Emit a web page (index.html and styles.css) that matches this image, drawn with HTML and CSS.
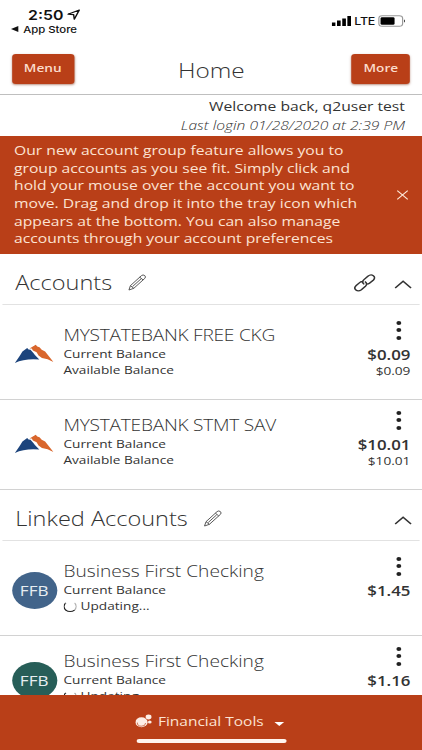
FILE: index.html
```html
<!DOCTYPE html>
<html lang="en">
<head>
  <meta charset="UTF-8" />
  <meta name="viewport" content="width=device-width, initial-scale=1.0" />
  <title>Home</title>
  <link rel="stylesheet" href="styles.css">
</head>
<body>
  <svg class="sprite">
    <symbol id="pencil" viewBox="0 0 15 17">
      <path d="M.7 16 1.9 11.7 11 1.6Q12.3.3 13.7 1.6 14.9 3 13.7 4.4L4.7 14.3Z M1.9 11.7 4.7 14.3 M9.6 3.2 12.3 5.9 M3.7 12.5 10.6 4.9" />
    </symbol>
    <symbol id="chevron" viewBox="0 0 15 9">
      <path d="M1 8 7.5 1.3 14 8" />
    </symbol>
    <symbol id="mountain" viewBox="0 0 32 20">
      <path fill="#d9662c" d="M12.2 4.4 17.3.7 18.6 2.4 20.4 3.2 22.2 5.8 25 7.6 31.8 18Q27 14.6 22.4 14L19.6 11.4 18 8.2 15 6.6 14 4.6Z" />
      <path fill="#1c447c" d="M.2 19 4.4 11.4 6.4 7.4 10.3 4 11.4 5.6 13 5.8 15.2 8.8 16.6 11 20.2 15.6Q8.5 14.3.2 19Z" />
    </symbol>
  </svg>

  <div class="screen">
    <div class="status-bar">
      <div class="status-left">
        <div class="time">2:50
          <svg width="11" height="11" viewBox="0 0 11 11"><path d="M.8 5.2 10 1 5.9 10.2 5.4 5.7Z" fill="none" stroke="#111" stroke-width="1.2" stroke-linejoin="round" /></svg>
        </div>
        <div class="back"><span class="back-arrow"></span>App Store</div>
      </div>
      <div class="status-right">
        <svg width="16" height="10" viewBox="0 0 16 10"><path d="M0 6.4h3V10H0zM4.3 4.6h3V10h-3zM8.6 2.4h3V10h-3zM12.8 0h3v10h-3z" /></svg>
        <span class="network">LTE</span>
        <svg width="23" height="12" viewBox="0 0 23 12"><rect x=".6" y=".8" width="19.5" height="10.4" rx="2.8" fill="none" stroke="#999" /><rect x="2" y="2.2" width="11.5" height="7.6" rx="1.2" /><path d="M21.3 4.2q1.5 1.8 0 3.6z" /></svg>
      </div>
    </div>

    <div class="nav-bar">
      <button class="btn">Menu</button>
      <h1>Home</h1>
      <button class="btn btn-more">More</button>
    </div>

    <div class="welcome">
      <div class="welcome-name">Welcome back, q2user test</div>
      <div class="last-login">Last login 01/28/2020 at 2:39 PM</div>
    </div>

    <div class="notice">
      <p>Our new account group feature allows you to<br>
        group accounts as you see fit. Simply click and<br>
        hold your mouse over the account you want to<br>
        move. Drag and drop it into the tray icon which<br>
        appears at the bottom. You can also manage<br>
        accounts through your account preferences</p>
      <svg class="close" width="10" height="10" viewBox="0 0 10 10"><path d="M.7.7 9.3 9.3M9.3.7.7 9.3" /></svg>
    </div>

    <div class="content">
      <div class="group">
        <div class="group-head">
          <h2>Accounts</h2>
          <svg class="icon pencil" width="15" height="17"><use href="#pencil" /></svg>
          <svg class="icon link" width="18" height="18" viewBox="0 0 18 18"><path d="M8.6 10.4Q6.2 8 8.4 5.6L11.6 2.2Q14-.1 16.1 1.7 18.1 3.6 16.2 6L12.9 9.3Q12 10.2 10.8 10.2M9.2 7.4Q11.8 9.8 9.6 12.3L6.3 15.7Q3.8 18 1.8 16 -.1 14.1 1.8 11.8L5.1 8.4Q6 7.5 7.2 7.5" /></svg>
          <svg class="icon chevron" width="15" height="9"><use href="#chevron" /></svg>
        </div>
        <div class="account">
          <svg class="logo" width="32" height="20"><use href="#mountain" /></svg>
          <div class="info">
            <div class="name name-caps">MYSTATEBANK FREE CKG</div>
            <div class="label">Current Balance</div>
            <div class="label">Available Balance</div>
          </div>
          <div class="amounts">
            <div class="dots"><i></i><i></i><i></i></div>
            <div class="current">$0.09</div>
            <div class="available">$0.09</div>
          </div>
        </div>
        <div class="account">
          <svg class="logo" width="32" height="20"><use href="#mountain" /></svg>
          <div class="info">
            <div class="name name-caps">MYSTATEBANK STMT SAV</div>
            <div class="label">Current Balance</div>
            <div class="label">Available Balance</div>
          </div>
          <div class="amounts">
            <div class="dots"><i></i><i></i><i></i></div>
            <div class="current">$10.01</div>
            <div class="available">$10.01</div>
          </div>
        </div>
      </div>

      <div class="group">
        <div class="group-head">
          <h2>Linked Accounts</h2>
          <svg class="icon pencil" width="15" height="17"><use href="#pencil" /></svg>
          <svg class="icon chevron" width="15" height="9"><use href="#chevron" /></svg>
        </div>
        <div class="account">
          <div class="avatar blue">FFB</div>
          <div class="info">
            <div class="name">Business First Checking</div>
            <div class="label">Current Balance</div>
            <div class="label updating"><span class="spinner"></span>Updating...</div>
          </div>
          <div class="amounts">
            <div class="dots"><i></i><i></i><i></i></div>
            <div class="current">$1.45</div>
          </div>
        </div>
        <div class="account">
          <div class="avatar green">FFB</div>
          <div class="info">
            <div class="name">Business First Checking</div>
            <div class="label">Current Balance</div>
            <div class="label updating"><span class="spinner"></span>Updating...</div>
          </div>
          <div class="amounts">
            <div class="dots"><i></i><i></i><i></i></div>
            <div class="current">$1.16</div>
          </div>
        </div>
      </div>
    </div>

    <div class="footer">
      <div class="tools">
        <svg width="14" height="14" viewBox="0 0 14 14"><circle cx="5" cy="8.2" r="5" /><circle cx="10.8" cy="3" r="2.4" /><circle cx="11.8" cy="8" r="1.5" /><path d="M1.6 8.6A3.4 3.4 0 0 0 8.4 9" /></svg>
        <span>Financial Tools</span>
        <span class="caret"></span>
      </div>
      <div class="home-indicator"></div>
    </div>
  </div>
</body>
</html>
```
FILE: styles.css
```css
* {
  box-sizing: border-box;
}
body {
  margin: 0;
  background: #fff;
  font-family: "Open Sans", "Noto Sans", sans-serif;
  color: #333;
  overflow: hidden;
}
h1, h2, p {
  margin: 0;
}
svg {
  display: block;
  flex: none;
}
.sprite {
  display: none;
}

.screen {
  width: 346px;
  height: 750px;
  display: flex;
  flex-direction: column;
  transform: scaleX(1.2197);
  transform-origin: 0 0;
  overflow: hidden;
}

.status-bar {
  height: 44px;
  flex: none;
  display: flex;
  justify-content: space-between;
  padding: 7px 13px 0 9px;
  font-family: Inter, "Liberation Sans", sans-serif;
  color: #111;
}
.time {
  display: flex;
  align-items: center;
  gap: 3px;
  padding-left: 14px;
  height: 15px;
  font-size: 13px;
  font-weight: 600;
}
.back {
  display: flex;
  align-items: center;
  gap: 4px;
  height: 14px;
  font-size: 9.3px;
  font-weight: 500;
}
.back-arrow {
  border: 3px solid transparent;
  border-right: 6px solid #111;
  border-left: 0;
}
.status-right {
  display: flex;
  align-items: center;
  height: 28px;
  gap: 2.5px;
}
.network {
  font-size: 10.2px;
  font-weight: 500;
  letter-spacing: -0.2px;
}

.nav-bar {
  height: 51px;
  flex: none;
  display: flex;
  align-items: flex-start;
  justify-content: space-between;
  padding: 10px 9.5px 0 9.5px;
  border-bottom: 1px solid #bfbfbf;
}
.nav-bar h1 {
  padding: 3px 2px 0 0;
  line-height: 28px;
  font-size: 20px;
  font-weight: 300;
}
.btn {
  width: 51px;
  height: 30px;
  padding: 0 0 3px;
  border: 0;
  border-radius: 3px;
  background: #b93f18;
  box-shadow: 0 1px 2px rgba(120, 40, 10, 0.5);
  color: #fbdccb;
  font-family: inherit;
  font-size: 11.2px;
  font-weight: 600;
}
.btn-more {
  width: 48.5px;
}

.welcome {
  height: 41px;
  flex: none;
  padding: 2px 14px 0 0;
  text-align: right;
}
.welcome-name {
  font-size: 12.85px;
  line-height: 19px;
}
.last-login {
  font-size: 12.8px;
  line-height: 18px;
  font-style: italic;
  font-weight: 300;
}

.notice {
  height: 118px;
  flex: none;
  display: flex;
  align-items: center;
  justify-content: space-between;
  padding: 0 11px 0 11.5px;
  background: #b93f18;
  color: #fce3d3;
}
.notice p {
  font-size: 12.85px;
  line-height: 17.6px;
  white-space: nowrap;
}
.close path {
  stroke: #fce3d3;
}

.content {
  flex: 1;
  min-height: 0;
  overflow: hidden;
}
.group-head {
  height: 51px;
  display: flex;
  align-items: center;
  margin: 0 2px;
  padding: 7px 6px 0 10.5px;
  border-bottom: 1px solid #e2e2e2;
}
.group-head h2 {
  font-size: 19.3px;
  line-height: 28px;
  font-weight: 300;
}
.icon {
  fill: none;
  stroke: #444;
}
.pencil {
  margin-left: 13px;
  stroke-width: 0.8;
}
.link {
  margin-left: auto;
  stroke: #333;
  stroke-width: 1.3;
}
.chevron {
  margin: 4px 0 0 auto;
  stroke: #333;
  stroke-width: 1.3;
}
.link + .chevron {
  margin-left: 15.5px;
}

.account {
  height: 90.5px;
  display: flex;
  padding: 0 9.5px;
  border-bottom: 1px solid #d2d2d2;
}
.group-head + .account {
  height: 94.5px;
  padding-top: 4.5px;
}
.logo {
  margin: 34px 8px 0 2.5px;
}
.avatar {
  flex: none;
  width: 37px;
  height: 37px;
  margin: 26px 5.5px 0 0;
  border-radius: 50%;
  color: #e8eef2;
  font-size: 14px;
  line-height: 38px;
  text-align: center;
}
.blue {
  background: #42648a;
}
.green {
  background: #275e58;
}
.info {
  padding-top: 14px;
}
.name {
  font-size: 15.7px;
  line-height: 22px;
  font-weight: 300;
  white-space: nowrap;
}
.name-caps {
  letter-spacing: -0.2px;
}
.label {
  font-size: 11.2px;
  line-height: 16.5px;
}
.updating {
  display: flex;
  align-items: center;
  gap: 3px;
}
.spinner {
  width: 11px;
  height: 11px;
  border: 1px solid #222;
  border-top-color: transparent;
  border-right-color: #aaa;
  border-radius: 50%;
}
.amounts {
  margin-left: auto;
  text-align: right;
}
.dots {
  display: flex;
  flex-direction: column;
  align-items: flex-end;
  gap: 3.5px;
  padding: 11px 8px 0 0;
  height: 36px;
}
.dots i {
  width: 4px;
  height: 4px;
  border-radius: 50%;
  background: #222;
}
.current {
  font-size: 13.8px;
  line-height: 17px;
  font-weight: 600;
}
.available {
  font-size: 11.2px;
  line-height: 16px;
}

.footer {
  height: 55.5px;
  flex: none;
  background: #b93f18;
  color: #fce3d3;
}
.tools {
  display: flex;
  align-items: center;
  height: 44px;
  padding: 9px 0 0 110.5px;
  font-size: 12.7px;
}
.tools svg {
  margin-right: 5px;
  fill: #fdeee6;
}
.tools path {
  fill: none;
  stroke: #b93f18;
  stroke-width: 0.6;
}
.caret {
  margin: 5px 0 0 9px;
  border: 4px solid transparent;
  border-top-color: #fff;
  border-bottom: 0;
}
.home-indicator {
  width: 123px;
  height: 4px;
  margin: 0 auto;
  border-radius: 2px;
  background: #fff5ef;
}
```
